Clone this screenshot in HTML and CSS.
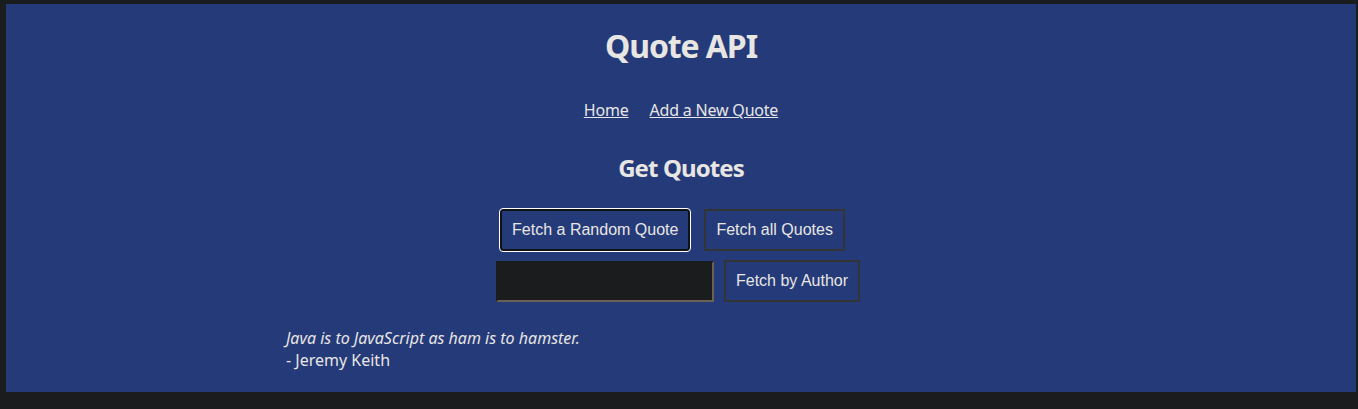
FILE: index.html
```html
<!DOCTYPE html>
<html lang="en">
<head>
<meta charset="utf-8">
<title>Quote API</title>
<link rel="stylesheet" href="styles.css">
</head>
<body>
<main class="page">
  <h1 class="title">Quote API</h1>
  <nav class="nav">
    <a href="#">Home</a>
    <a href="#">Add a New Quote</a>
  </nav>
  <h2 class="subtitle">Get Quotes</h2>
  <div class="row row-fetch">
    <button class="btn btn-focus">Fetch a Random Quote</button>
    <button class="btn">Fetch all Quotes</button>
  </div>
  <div class="row row-author">
    <input class="author-input" type="text">
    <button class="btn">Fetch by Author</button>
  </div>
  <div class="quotes">
    <p class="quote-text">Java is to JavaScript as ham is to hamster.</p>
    <p class="quote-author">- Jeremy Keith</p>
  </div>
</main>
</body>
</html>
```
FILE: styles.css
```css
html, body {
  margin: 0;
  padding: 0;
  background: #1b1c1e;
}
body {
  padding: 4px 2px 17px 6px;
  font-family: "Noto Sans", sans-serif;
  color: #e8e6e3;
}
.page {
  background: #253a79;
  height: 388px;
  box-sizing: border-box;
  padding-top: 20px;
  display: flex;
  flex-direction: column;
  align-items: center;
}
.title {
  margin: 0;
  font-size: 32px;
  font-weight: 700;
  line-height: 44px;
  letter-spacing: -1.1px;
}
.nav {
  margin-top: 31px;
  display: flex;
  gap: 21px;
  font-size: 16px;
  line-height: 22px;
  letter-spacing: -0.2px;
}
.nav a {
  color: #e8e6e3;
  text-decoration: underline;
}
.subtitle {
  margin: 31px 0 0;
  font-size: 24px;
  font-weight: 700;
  line-height: 32px;
  letter-spacing: -0.9px;
}
.row {
  margin-top: 25px;
  display: flex;
  align-items: center;
  gap: 14px;
}
.row-fetch {
  padding-right: 17px;
}
.row-author {
  margin-top: 9px;
  gap: 10px;
  padding-right: 6px;
}
.btn {
  font-family: "Liberation Sans", Arial, sans-serif;
  font-size: 16px;
  color: #e8e6e3;
  background: #253a79;
  border: 2px solid #333436;
  padding: 10px 10px;
  line-height: 18px;
  cursor: pointer;
}
.btn-focus {
  border: 2px solid #111214;
  outline: 1px solid #ffffff;
  outline-offset: 0;
  border-radius: 3px;
}
.author-input {
  width: 218px;
  height: 41px;
  box-sizing: border-box;
  background: #1b1c1e;
  border: 2px solid #1b1c1e;
  border-right-color: #6b6152;
  border-bottom-color: #6b6152;
  color: #e8e6e3;
}
.quotes {
  margin-top: 25px;
  width: 790px;
  font-size: 16px;
  line-height: 22px;
}
.quote-text {
  margin: 0;
  font-style: italic;
}
.quote-author {
  margin: 0;
}
```
